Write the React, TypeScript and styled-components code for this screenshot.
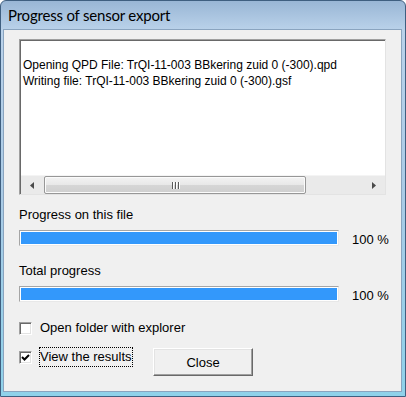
import React from 'react';
import styled, { createGlobalStyle } from 'styled-components';

const GlobalStyle = createGlobalStyle`
  html, body {
    margin: 0;
    padding: 0;
    background: #ffffff;
  }
  * {
    box-sizing: border-box;
  }
`;

const Window = styled.div`
  width: 406px;
  height: 397px;
  border: 1px solid #3f5f80;
  border-radius: 6px 6px 0 0;
  padding: 0 3px 4px 2px;
  display: flex;
  flex-direction: column;
  background: linear-gradient(
    to bottom,
    #99b6d5 0px,
    #bad2ea 29px,
    #aacbe6 50%,
    #8fd2ea 100%
  );
  overflow: hidden;
`;

const TitleBar = styled.div`
  height: 28px;
  flex: none;
  display: flex;
  align-items: center;
  padding: 0 0 1px 5px;
  font-family: Lato, 'Noto Sans', sans-serif;
  font-size: 15px;
  letter-spacing: -0.2px;
  color: #000;
`;

const Client = styled.div`
  flex: 1;
  background: #f0f0f0;
  border: 1px solid #8aa4bf;
  padding: 9px 15px 0 15px;
  display: flex;
  flex-direction: column;
  font-family: 'Liberation Sans', Arial, sans-serif;
  font-size: 13px;
  color: #000;
`;

const LogBox = styled.div`
  height: 156px;
  flex: none;
  background: #ffffff;
  border-top: 1px solid #a0a0a0;
  border-left: 1px solid #a0a0a0;
  border-right: 1px solid #e3e3e3;
  border-bottom: 1px solid #e3e3e3;
  box-shadow: inset 1px 1px 0 #696969;
  display: flex;
  flex-direction: column;
  padding: 1px 0 0 1px;
`;

const LogText = styled.div`
  flex: 1;
  padding: 16px 0 0 2px;
  line-height: 16px;
  font-size: 12px;
  white-space: nowrap;
  overflow: hidden;
`;

const HScroll = styled.div`
  height: 19px;
  flex: none;
  display: flex;
  background: #eaeaea;
  border-top: 1px solid #f4f4f4;
`;

const ArrowButton = styled.div`
  width: 22px;
  display: flex;
  align-items: center;
  justify-content: center;
`;

const Track = styled.div`
  flex: 1;
  display: flex;
  padding: 0 1px;
`;

const Thumb = styled.div`
  width: 262px;
  height: 100%;
  border: 1px solid #979797;
  border-radius: 2px;
  background: linear-gradient(to bottom, #f3f3f3 0%, #e8e8e8 50%, #d6d6d6 51%, #cfcfcf 100%);
  box-shadow: inset 0 0 0 1px #fbfbfb;
  display: flex;
  align-items: center;
  justify-content: center;
  gap: 2px;
`;

const Grip = styled.span`
  width: 1px;
  height: 7px;
  background: #5a5a5a;
  box-shadow: 1px 0 0 #ffffff;
`;

const Label = styled.div<{ $top: number }>`
  margin-top: ${({ $top }) => $top}px;
  line-height: 16px;
  height: 16px;
`;

const ProgressRow = styled.div<{ $top: number }>`
  margin-top: ${({ $top }) => $top}px;
  height: 16px;
  display: flex;
  align-items: flex-start;
  gap: 13px;
`;

const ProgressTrack = styled.div`
  width: 320px;
  height: 16px;
  flex: none;
  border-top: 1px solid #a5a5a5;
  border-left: 1px solid #a5a5a5;
  border-right: 1px solid #e8e8e8;
  border-bottom: 1px solid #e8e8e8;
  background: #ffffff;
  padding: 1px;
`;

const ProgressFill = styled.div`
  height: 100%;
  background: #3398fb;
`;

const Percent = styled.span`
  line-height: 16px;
  padding-top: 2px;
  white-space: nowrap;
`;

const CheckRow = styled.div<{ $top: number }>`
  margin-top: ${({ $top }) => $top}px;
  display: flex;
  align-items: center;
  gap: 8px;
`;

const CheckBox = styled.span`
  width: 13px;
  height: 13px;
  flex: none;
  background: #ffffff;
  border-top: 1px solid #a0a0a0;
  border-left: 1px solid #a0a0a0;
  border-right: 1px solid #ffffff;
  border-bottom: 1px solid #ffffff;
  box-shadow: inset 1px 1px 0 #696969, inset -1px -1px 0 #e3e3e3;
  display: flex;
  align-items: center;
  justify-content: center;
`;

const CheckLabel = styled.span<{ $focused?: boolean }>`
  line-height: 16px;
  padding: 1px 0;
  white-space: nowrap;
  outline: ${({ $focused }) => ($focused ? '1px dotted #000' : 'none')};
`;

const BottomRow = styled.div`
  display: grid;
  grid-template-columns: 134px 100px;
  align-items: start;
  margin-top: 11px;
`;

const CloseButton = styled.button`
  width: 100px;
  height: 28px;
  background: #f0f0f0;
  border-top: 1px solid #ffffff;
  border-left: 1px solid #ffffff;
  border-right: 1px solid #696969;
  border-bottom: 1px solid #696969;
  box-shadow: inset -1px -1px 0 #a0a0a0, inset 1px 1px 0 #e3e3e3;
  font-family: 'Liberation Sans', Arial, sans-serif;
  font-size: 13px;
  color: #000;
  padding: 0;
`;

const LeftTri = () => (
  <svg width="4" height="7" viewBox="0 0 4 7">
    <path d="M4 0 L0 3.5 L4 7 Z" fill="#4a4a4a" />
  </svg>
);

const RightTri = () => (
  <svg width="4" height="7" viewBox="0 0 4 7">
    <path d="M0 0 L4 3.5 L0 7 Z" fill="#4a4a4a" />
  </svg>
);

const CheckMark = () => (
  <svg width="9" height="9" viewBox="0 0 9 9">
    <path d="M1 4 L3.5 6.5 L8 2" stroke="#000" strokeWidth="2" fill="none" />
  </svg>
);

const App: React.FC = () => {
  return (
    <>
      <GlobalStyle />
      <Window>
        <TitleBar>Progress of sensor export</TitleBar>
        <Client>
          <LogBox>
            <LogText>
              <div>Opening QPD File: TrQI-11-003 BBkering zuid 0 (-300).qpd</div>
              <div>Writing file: TrQI-11-003 BBkering zuid 0 (-300).gsf</div>
            </LogText>
            <HScroll>
              <ArrowButton>
                <LeftTri />
              </ArrowButton>
              <Track>
                <Thumb>
                  <Grip />
                  <Grip />
                  <Grip />
                </Thumb>
              </Track>
              <ArrowButton>
                <RightTri />
              </ArrowButton>
            </HScroll>
          </LogBox>

          <Label $top={12}>Progress on this file</Label>
          <ProgressRow $top={7}>
            <ProgressTrack>
              <ProgressFill style={{ width: '100%' }} />
            </ProgressTrack>
            <Percent>100 %</Percent>
          </ProgressRow>

          <Label $top={17}>Total progress</Label>
          <ProgressRow $top={7}>
            <ProgressTrack>
              <ProgressFill style={{ width: '100%' }} />
            </ProgressTrack>
            <Percent>100 %</Percent>
          </ProgressRow>

          <CheckRow $top={17}>
            <CheckBox />
            <CheckLabel>Open folder with explorer</CheckLabel>
          </CheckRow>

          <BottomRow>
            <CheckRow $top={0}>
              <CheckBox>
                <CheckMark />
              </CheckBox>
              <CheckLabel $focused>View the results</CheckLabel>
            </CheckRow>
            <CloseButton>Close</CloseButton>
          </BottomRow>
        </Client>
      </Window>
    </>
  );
};

export default App;
